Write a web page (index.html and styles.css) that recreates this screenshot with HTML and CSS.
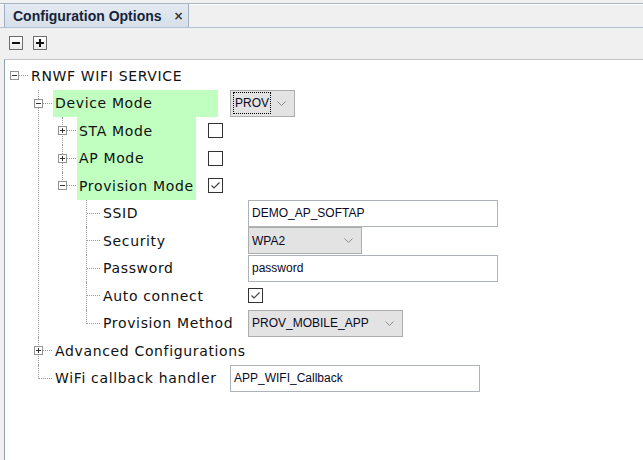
FILE: index.html
```html
<!DOCTYPE html>
<html>
<head>
<meta charset="utf-8">
<title>Configuration Options</title>
<link rel="stylesheet" href="styles.css">
</head>
<body>
<div class="window">
  <div class="tabstrip">
    <div class="tab"><span class="tab-title">Configuration Options</span><span class="tab-close">×</span></div>
  </div>
  <div class="toolbar">
    <span class="tbtn minus"></span>
    <span class="tbtn plus"></span>
  </div>
  <div class="content">
    <ul class="tree">
      <li>
        <div class="row">
          <span class="gutter"><span class="exp open"></span><span class="hl"></span></span>
          <span class="label">RNWF WIFI SERVICE</span>
        </div>
        <ul class="children">
          <li>
            <div class="row">
              <span class="gutter"><span class="exp open"></span><span class="hl"></span></span>
              <span class="label lbl1 green">Device Mode</span>
              <span class="combo w-prov"><span class="focus">PROV</span><svg class="chev" width="9" height="5" viewBox="0 0 9 5"><polyline points="0.5,0.5 4.5,4.5 8.5,0.5"/></svg></span>
            </div>
            <ul class="children">
              <li>
                <div class="row">
                  <span class="gutter"><span class="exp"></span><span class="hl"></span></span>
                  <span class="label lbl2 green">STA Mode</span>
                  <span class="check"></span>
                </div>
              </li>
              <li>
                <div class="row">
                  <span class="gutter"><span class="exp"></span><span class="hl"></span></span>
                  <span class="label lbl2 green">AP Mode</span>
                  <span class="check"></span>
                </div>
              </li>
              <li>
                <div class="row">
                  <span class="gutter"><span class="exp open"></span><span class="hl"></span></span>
                  <span class="label lbl2 green">Provision Mode</span>
                  <span class="check"><svg width="13" height="13" viewBox="0 0 13 13"><polyline points="2.5,6.5 5,9 10.5,3.5"/></svg></span>
                </div>
                <ul class="children">
                  <li>
                    <div class="row leaf">
                      <span class="gutter"><span class="hl"></span></span>
                      <span class="label lbl3">SSID</span>
                      <span class="field w-long">DEMO_AP_SOFTAP</span>
                    </div>
                  </li>
                  <li>
                    <div class="row leaf">
                      <span class="gutter"><span class="hl"></span></span>
                      <span class="label lbl3">Security</span>
                      <span class="combo w-sec">WPA2<svg class="chev" width="9" height="5" viewBox="0 0 9 5"><polyline points="0.5,0.5 4.5,4.5 8.5,0.5"/></svg></span>
                    </div>
                  </li>
                  <li>
                    <div class="row leaf">
                      <span class="gutter"><span class="hl"></span></span>
                      <span class="label lbl3">Password</span>
                      <span class="field w-long">password</span>
                    </div>
                  </li>
                  <li>
                    <div class="row leaf">
                      <span class="gutter"><span class="hl"></span></span>
                      <span class="label lbl3">Auto connect</span>
                      <span class="check"><svg width="13" height="13" viewBox="0 0 13 13"><polyline points="2.5,6.5 5,9 10.5,3.5"/></svg></span>
                    </div>
                  </li>
                  <li>
                    <div class="row leaf">
                      <span class="gutter"><span class="hl"></span></span>
                      <span class="label lbl3">Provision Method</span>
                      <span class="combo w-pm">PROV_MOBILE_APP<svg class="chev" width="9" height="5" viewBox="0 0 9 5"><polyline points="0.5,0.5 4.5,4.5 8.5,0.5"/></svg></span>
                    </div>
                  </li>
                </ul>
              </li>
            </ul>
          </li>
          <li>
            <div class="row">
              <span class="gutter"><span class="exp"></span><span class="hl"></span></span>
              <span class="label">Advanced Configurations</span>
            </div>
          </li>
          <li>
            <div class="row leaf">
              <span class="gutter"><span class="hl"></span></span>
              <span class="label lbl1">WiFi callback handler</span>
              <span class="field w-long">APP_WIFI_Callback</span>
            </div>
          </li>
        </ul>
      </li>
    </ul>
  </div>
</div>
</body>
</html>
```

FILE: styles.css
```css
* { box-sizing: border-box; }
html, body { margin: 0; padding: 0; }
body {
  width: 643px;
  height: 460px;
  overflow: hidden;
  background: #f0f0f0;
  font-family: "DejaVu Sans", sans-serif;
  color: #000;
}
.window {
  display: flex;
  flex-direction: column;
  height: 460px;
}

/* tab strip */
.tabstrip {
  margin-top: 3px;
  height: 25px;
  border-top: 1px solid #aab6c3;
  border-bottom: 1px solid #b3c2d2;
  box-shadow: inset 0 1px 0 #ffffff;
  padding-left: 4px;
  display: flex;
}
.tab {
  width: 185px;
  display: flex;
  align-items: center;
  padding-left: 8px;
  background: linear-gradient(#e4eaf1, #d6dfe9);
  border-left: 1px solid #9fb0c2;
  border-right: 1px solid #9fb0c2;
}
.tab-title {
  font-family: "Liberation Sans", Arial, sans-serif;
  font-weight: bold;
  font-size: 14px;
  color: #17233a;
}
.tab-close {
  margin-left: 12px;
  font-family: "DejaVu Sans", sans-serif;
  font-weight: bold;
  font-size: 12px;
  color: #333;
}

/* toolbar */
.toolbar {
  height: 31px;
  display: flex;
  align-items: flex-start;
  gap: 10px;
  padding: 8px 0 0 9px;
}
.tbtn {
  position: relative;
  width: 14px;
  height: 14px;
  border: 1px solid #6c6c6c;
  background: linear-gradient(#ffffff, #e9e9e9);
}
.tbtn::before {
  content: "";
  position: absolute;
  left: 2px;
  top: 5px;
  width: 8px;
  height: 2px;
  background: #111;
}
.tbtn.plus::after {
  content: "";
  position: absolute;
  left: 5px;
  top: 2px;
  width: 2px;
  height: 8px;
  background: #111;
}

/* content */
.content {
  flex: 1;
  margin-left: 4px;
  border-left: 1px solid #8d9fb3;
  border-top: 1px solid #c4c4c4;
  background: #ffffff;
  padding-top: 2px;
}
.tree, .children {
  list-style: none;
  margin: 0;
  padding: 0;
}
.children { margin-left: 24px; }
.tree li { position: relative; }
.children > li::before {
  content: "";
  position: absolute;
  left: 9px;
  top: 0;
  bottom: 0;
  border-left: 1px dotted #9a9a9a;
}
.children > li:last-child::before {
  bottom: auto;
  height: 14px;
}
.row {
  display: flex;
  align-items: center;
  height: 27.5px;
}
.gutter {
  flex: none;
  width: 24px;
  height: 100%;
  display: flex;
  align-items: center;
}
.exp {
  position: relative;
  z-index: 1;
  flex: none;
  width: 9px;
  height: 9px;
  margin-left: 5px;
  border: 1px solid #939393;
  background: #fff;
}
.exp::before {
  content: "";
  position: absolute;
  left: 1px;
  top: 3px;
  width: 5px;
  height: 1px;
  background: #333;
}
.exp:not(.open)::after {
  content: "";
  position: absolute;
  left: 3px;
  top: 1px;
  width: 1px;
  height: 5px;
  background: #333;
}
.hl {
  flex: 1;
  height: 0;
  margin-right: 1px;
  border-top: 1px dotted #9a9a9a;
}
.leaf .hl { margin-left: 10px; }

.label {
  flex: none;
  height: 100%;
  display: flex;
  align-items: center;
  padding-left: 2px;
  font-size: 14px;
  letter-spacing: 0.65px;
  white-space: nowrap;
  color: #111;
}
.lbl1 { width: 165px; margin-right: 12px; }
.lbl2 { width: 119px; margin-right: 12px; }
.lbl3 { width: 135px; margin-right: 12px; }
.green { background: #c0ffc0; }

/* value editors */
.field, .combo {
  flex: none;
  height: 27px;
  display: flex;
  align-items: center;
  font-family: "Liberation Sans", Arial, sans-serif;
  font-size: 12px;
  color: #0a0a1e;
  white-space: nowrap;
}
.field {
  border: 1px solid #aeb3ba;
  background: #fff;
  padding-left: 3px;
}
.combo {
  border: 1px solid #adadad;
  background: #e3e3e3;
  padding-left: 3px;
}
.combo .chev {
  margin-left: auto;
  margin-right: 8px;
  fill: none;
  stroke: #8c8c8c;
  stroke-width: 1;
}
.focus {
  border: 1px dotted #000;
  padding: 3px 1px 3px 1px;
  margin-left: -1px;
}
.w-prov { width: 65px; }
.w-sec { width: 114px; }
.w-pm { width: 155px; }
.w-long { width: 250px; }

.check {
  flex: none;
  width: 15px;
  height: 15px;
  border: 1px solid #333;
  background: #fff;
  display: flex;
}
.check svg polyline {
  fill: none;
  stroke: #444;
  stroke-width: 1.2;
}
```
